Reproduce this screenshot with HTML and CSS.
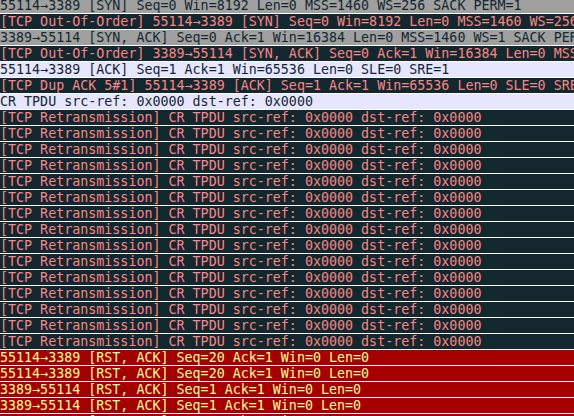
FILE: index.html
```html
<!DOCTYPE html>
<html lang="en">
<head>
    <meta charset="UTF-8">
    <title>Packet list</title>
    <link rel="stylesheet" href="styles.css">
</head>
<body>
<div class="packet-list">
    <div class="packet-row packet-syn">55114→3389 [SYN] Seq=0 Win=8192 Len=0 MSS=1460 WS=256 SACK_PERM=1</div>
    <div class="packet-row packet-bad">[TCP Out-Of-Order] 55114→3389 [SYN] Seq=0 Win=8192 Len=0 MSS=1460 WS=256 SACK_PERM=1</div>
    <div class="packet-row packet-syn">3389→55114 [SYN, ACK] Seq=0 Ack=1 Win=16384 Len=0 MSS=1460 WS=1 SACK_PERM=1</div>
    <div class="packet-row packet-bad">[TCP Out-Of-Order] 3389→55114 [SYN, ACK] Seq=0 Ack=1 Win=16384 Len=0 MSS=1460 WS=1 SACK_PERM=1</div>
    <div class="packet-row packet-tcp">55114→3389 [ACK] Seq=1 Ack=1 Win=65536 Len=0 SLE=0 SRE=1</div>
    <div class="packet-row packet-bad">[TCP Dup ACK 5#1] 55114→3389 [ACK] Seq=1 Ack=1 Win=65536 Len=0 SLE=0 SRE=1</div>
    <div class="packet-row packet-tcp">CR TPDU src-ref: 0x0000 dst-ref: 0x0000</div>
    <div class="packet-row packet-bad">[TCP Retransmission] CR TPDU src-ref: 0x0000 dst-ref: 0x0000</div>
    <div class="packet-row packet-bad">[TCP Retransmission] CR TPDU src-ref: 0x0000 dst-ref: 0x0000</div>
    <div class="packet-row packet-bad">[TCP Retransmission] CR TPDU src-ref: 0x0000 dst-ref: 0x0000</div>
    <div class="packet-row packet-bad">[TCP Retransmission] CR TPDU src-ref: 0x0000 dst-ref: 0x0000</div>
    <div class="packet-row packet-bad">[TCP Retransmission] CR TPDU src-ref: 0x0000 dst-ref: 0x0000</div>
    <div class="packet-row packet-bad">[TCP Retransmission] CR TPDU src-ref: 0x0000 dst-ref: 0x0000</div>
    <div class="packet-row packet-bad">[TCP Retransmission] CR TPDU src-ref: 0x0000 dst-ref: 0x0000</div>
    <div class="packet-row packet-bad">[TCP Retransmission] CR TPDU src-ref: 0x0000 dst-ref: 0x0000</div>
    <div class="packet-row packet-bad">[TCP Retransmission] CR TPDU src-ref: 0x0000 dst-ref: 0x0000</div>
    <div class="packet-row packet-bad">[TCP Retransmission] CR TPDU src-ref: 0x0000 dst-ref: 0x0000</div>
    <div class="packet-row packet-bad">[TCP Retransmission] CR TPDU src-ref: 0x0000 dst-ref: 0x0000</div>
    <div class="packet-row packet-bad">[TCP Retransmission] CR TPDU src-ref: 0x0000 dst-ref: 0x0000</div>
    <div class="packet-row packet-bad">[TCP Retransmission] CR TPDU src-ref: 0x0000 dst-ref: 0x0000</div>
    <div class="packet-row packet-bad">[TCP Retransmission] CR TPDU src-ref: 0x0000 dst-ref: 0x0000</div>
    <div class="packet-row packet-bad">[TCP Retransmission] CR TPDU src-ref: 0x0000 dst-ref: 0x0000</div>
    <div class="packet-row packet-rst">55114→3389 [RST, ACK] Seq=20 Ack=1 Win=0 Len=0</div>
    <div class="packet-row packet-rst">55114→3389 [RST, ACK] Seq=20 Ack=1 Win=0 Len=0</div>
    <div class="packet-row packet-rst">3389→55114 [RST, ACK] Seq=1 Ack=1 Win=0 Len=0</div>
    <div class="packet-row packet-rst">3389→55114 [RST, ACK] Seq=1 Ack=1 Win=0 Len=0</div>
    <div class="packet-row packet-rst">3389→55114 [RST, ACK] Seq=1 Ack=1 Win=0 Len=0</div>
</div>
</body>
</html>
```

FILE: styles.css
```css
html, body {
    margin: 0;
    padding: 0;
    background-color: #fff;
    overflow: hidden;
}

.packet-list {
    margin-top: -2px;
    font-family: "DejaVu Sans Mono", monospace;
    font-size: 13.33px;
}

.packet-row {
    height: 15px;
    line-height: 15px;
    border-bottom: 1px solid #fff;
    padding-left: 0;
    white-space: pre;
    overflow: hidden;
}

.packet-syn {
    background-color: #a0a0a0;
    color: #12272e;
}

.packet-bad {
    background-color: #12272e;
    color: #f78787;
}

.packet-tcp {
    background-color: #e7e6ff;
    color: #12272e;
}

.packet-rst {
    background-color: #a40000;
    color: #fffc9c;
}
```
